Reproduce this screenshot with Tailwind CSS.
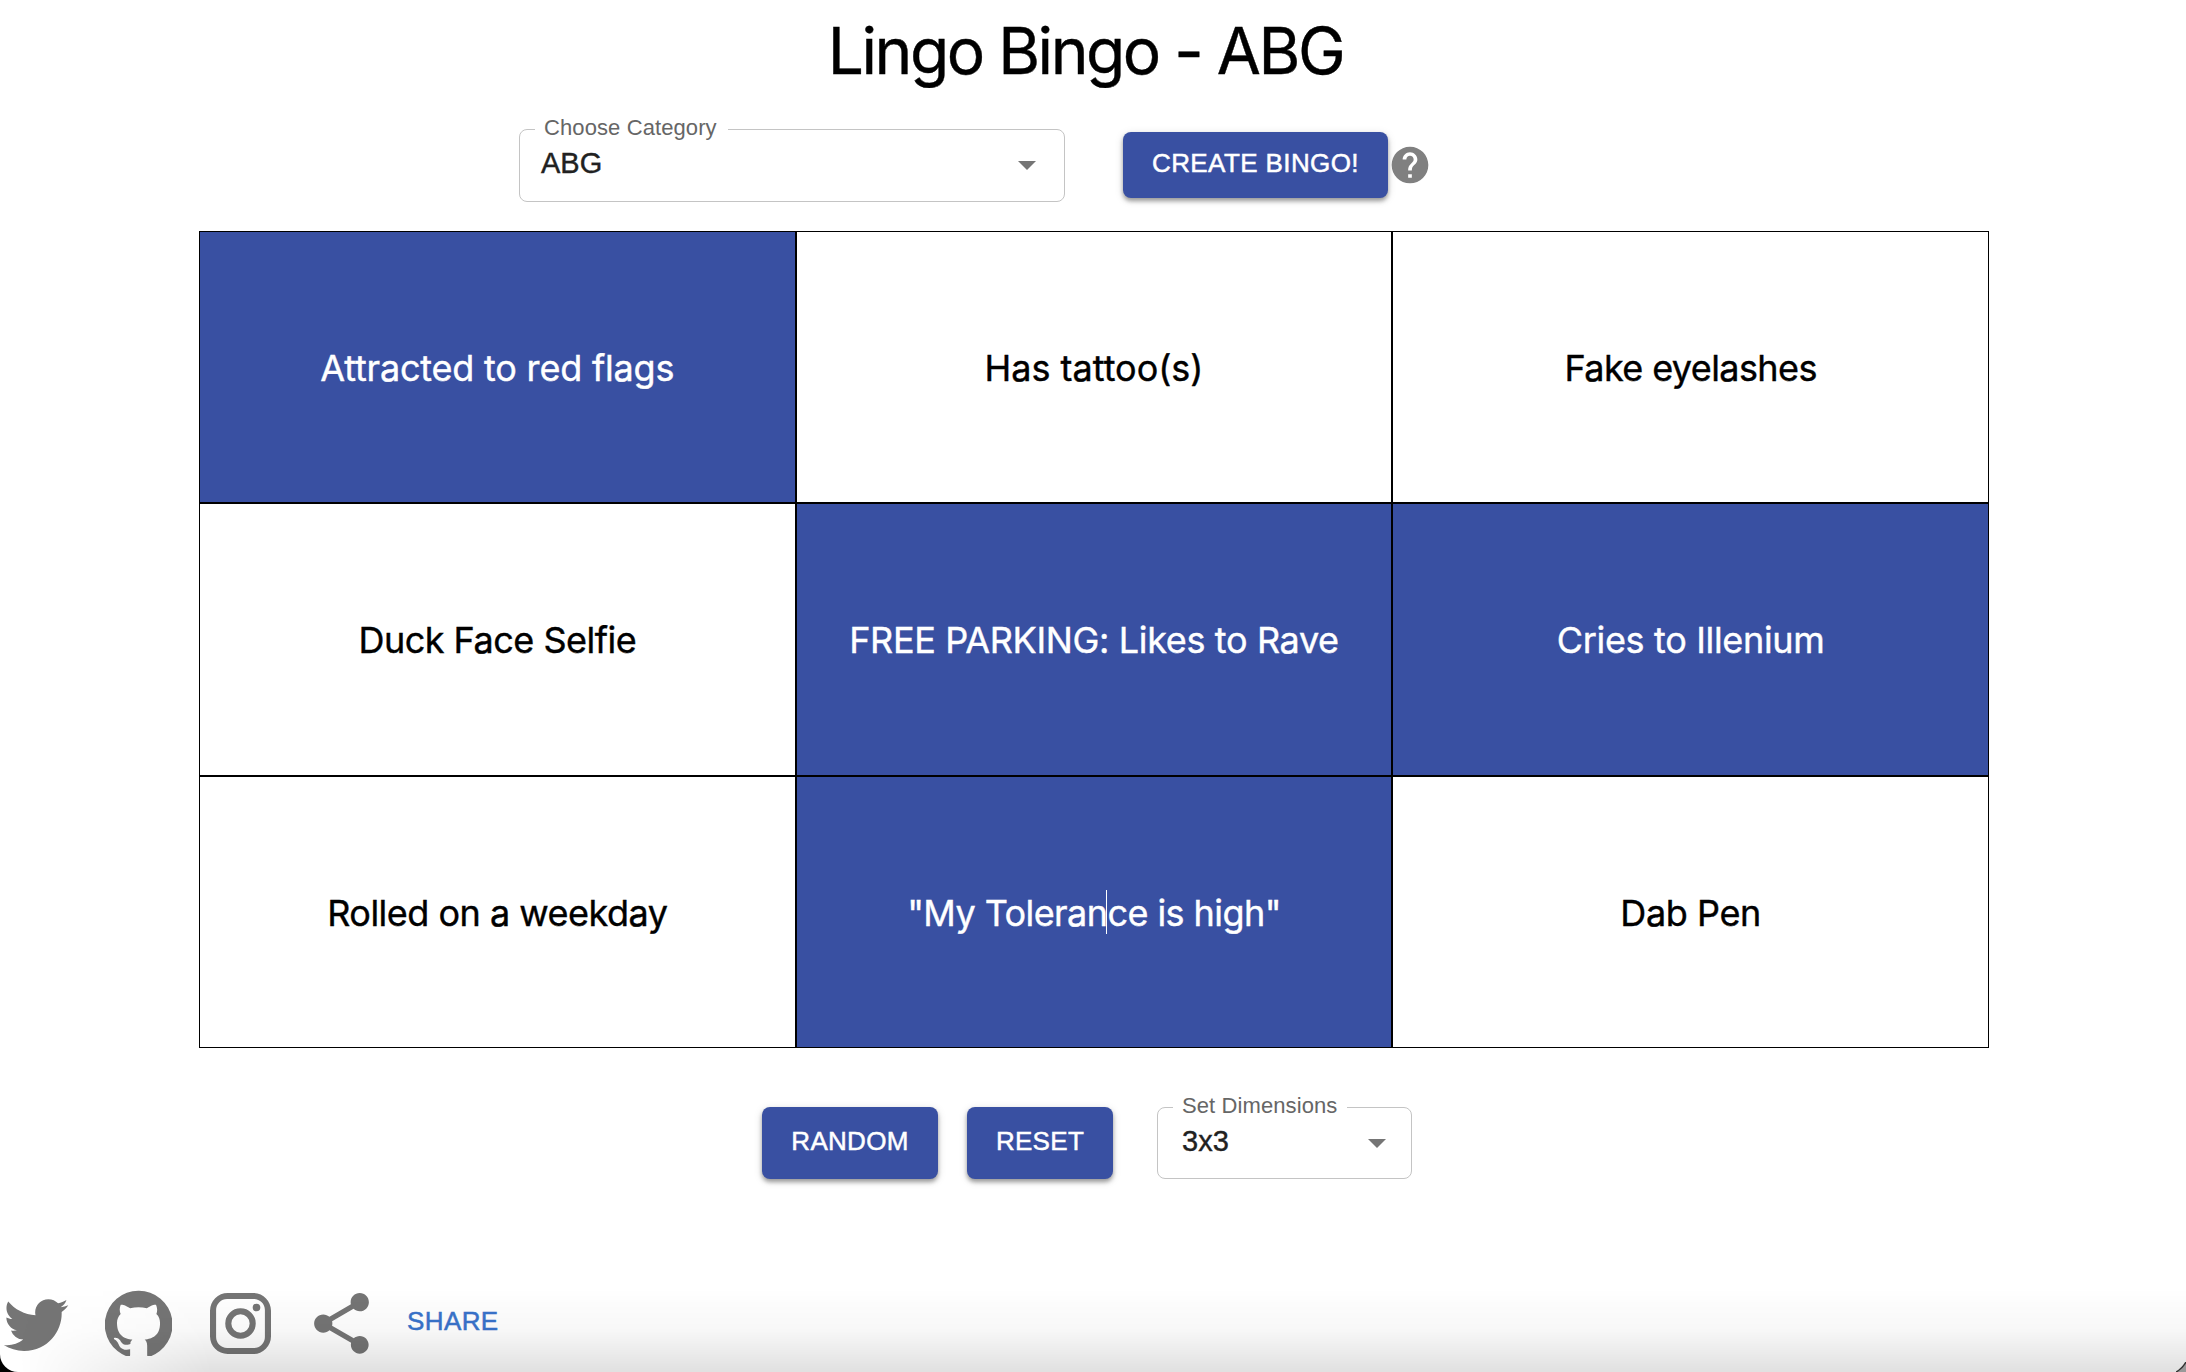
<!DOCTYPE html>
<html lang="en">

<head>
    <meta charset="UTF-8">
    <meta name="viewport" content="width=device-width, initial-scale=1.0">
    <title>Lingo Bingo</title>
    <script src="https://cdn.jsdelivr.net/npm/@tailwindcss/browser@4"></script>
</head>

<body class="bg-black">
    <div id="app" class="relative flex flex-col w-full h-[1372px] overflow-hidden bg-white rounded-bl-[18px] font-['Liberation_Sans',sans-serif]">
        <h1 class="h-[129px] pt-[12px] pr-[15px] text-center text-[64px] leading-[78px] tracking-[-2.45px] text-black font-['Inter',sans-serif] [-webkit-text-stroke:0.4px]">Lingo Bingo - ABG</h1>

        <!-- category picker -->
        <div class="flex h-[102px] pl-[519px]">
            <fieldset class="w-[546px] h-[73px] border border-[#c4c4c4] rounded-lg flex items-start relative">
                <span class="absolute left-[15px] top-[-15px] pl-[9px] pr-[11px] bg-white text-[22px] leading-[26px] tracking-[0.1px] text-[#666]">Choose Category</span>
                <span class="pl-[21px] pt-[15px] text-[29px] leading-[36px] text-[#212121] [-webkit-text-stroke:0.4px]">ABG</span>
                <svg class="absolute left-[498px] top-[31px] w-[18px] h-[9px]" viewBox="0 0 18 9" fill="#757575"><path d="M0 0h18L9 9z" /></svg>
            </fieldset>
            <button class="ml-[58px] mt-[3px] w-[265px] h-[66px] pb-[3px] rounded-lg bg-[#3950a2] text-white text-[26px] tracking-[0.4px] [-webkit-text-stroke:0.5px] shadow-[0_3px_4px_rgba(0,0,0,0.35),0_2px_10px_rgba(0,0,0,0.12)]">CREATE BINGO!</button>
            <svg class="mt-[14px] w-[44px] h-[44px]" viewBox="0 0 24 24" fill="#808080"><path d="M12 2C6.48 2 2 6.48 2 12s4.48 10 10 10 10-4.48 10-10S17.52 2 12 2zm1 17h-2v-2h2v2zm2.07-7.75l-.9.92C13.45 12.9 13 13.5 13 15h-2v-.5c0-1.1.45-2.1 1.17-2.83l1.24-1.26c.37-.36.59-.86.59-1.41 0-1.1-.9-2-2-2s-2 .9-2 2H8c0-2.21 1.79-4 4-4s4 1.79 4 4c0 .88-.36 1.68-.93 2.25z" /></svg>
        </div>

        <!-- board -->
        <div class="ml-[199px] w-[1790px] h-[817px] grid grid-cols-3 grid-rows-3 text-[36px] text-black font-['Inter',sans-serif] [-webkit-text-stroke:0.4px] [&>div]:flex [&>div]:items-center [&>div]:justify-center [&>div]:pt-[2px] [&>div]:border [&>div]:border-black">
            <div class="bg-[#3950a2] text-white tracking-[-0.2px]"><span>Attracted to red flags</span></div>
            <div><span>Has tattoo(s)</span></div>
            <div class="tracking-[-0.6px]"><span>Fake eyelashes</span></div>
            <div class="tracking-[-0.5px]"><span>Duck Face Selfie</span></div>
            <div class="bg-[#3950a2] text-white tracking-[-0.35px]"><span>FREE PARKING: Likes to Rave</span></div>
            <div class="bg-[#3950a2] text-white tracking-[-0.33px]"><span>Cries to Illenium</span></div>
            <div class="tracking-[-0.5px]"><span>Rolled on a weekday</span></div>
            <div class="bg-[#3950a2] text-white tracking-[-0.57px] relative"><span>"My Tolerance is high"</span><i class="absolute left-[309px] top-[113px] w-px h-[44px] bg-white"></i></div>
            <div class="tracking-[-0.4px]"><span>Dab Pen</span></div>
        </div>

        <!-- board controls -->
        <div class="flex mt-[59px] pl-[762px]">
            <button class="w-[176px] h-[72px] pb-[4px] rounded-lg bg-[#3950a2] text-white text-[26px] tracking-[0.3px] [-webkit-text-stroke:0.5px] shadow-[0_3px_4px_rgba(0,0,0,0.35),0_2px_10px_rgba(0,0,0,0.12)]">RANDOM</button>
            <button class="ml-[29px] w-[146px] h-[72px] pb-[4px] rounded-lg bg-[#3950a2] text-white text-[26px] tracking-[0.3px] [-webkit-text-stroke:0.5px] shadow-[0_3px_4px_rgba(0,0,0,0.35),0_2px_10px_rgba(0,0,0,0.12)]">RESET</button>
            <fieldset class="ml-[44px] w-[255px] h-[72px] border border-[#c4c4c4] rounded-lg flex items-start relative">
                <span class="absolute left-[15px] top-[-15px] pl-[9px] pr-[10px] bg-white text-[22px] leading-[26px] tracking-[0.1px] text-[#666]">Set Dimensions</span>
                <span class="pl-[24px] pt-[15px] text-[29px] leading-[36px] text-[#212121] [-webkit-text-stroke:0.4px]">3x3</span>
                <svg class="absolute left-[210px] top-[31px] w-[18px] h-[9px]" viewBox="0 0 18 9" fill="#757575"><path d="M0 0h18L9 9z" /></svg>
            </fieldset>
        </div>

        <!-- footer links -->
        <div class="flex items-center mt-[108px] h-[72px] text-[#757575]">
            <svg class="-ml-[1px] w-[74px] h-[73px]" viewBox="0 0 24 24" preserveAspectRatio="none" fill="currentColor"><path d="M22.46 6c-.77.35-1.6.58-2.46.69.88-.53 1.56-1.37 1.88-2.38-.83.5-1.75.85-2.72 1.05C18.37 4.5 17.26 4 16 4c-2.35 0-4.27 1.92-4.27 4.29 0 .34.04.67.11.98C8.28 9.09 5.11 7.38 3 4.79c-.37.63-.58 1.37-.58 2.15 0 1.49.75 2.81 1.91 3.56-.71 0-1.37-.2-1.95-.5v.03c0 2.08 1.48 3.82 3.44 4.21a4.22 4.22 0 0 1-1.93.07 4.28 4.28 0 0 0 4 2.98 8.521 8.521 0 0 1-5.33 1.84c-.34 0-.68-.02-1.02-.06C3.44 20.29 5.7 21 8.12 21 16 21 20.33 14.46 20.33 8.79c0-.19 0-.37-.01-.56.84-.6 1.56-1.36 2.14-2.23z" /></svg>
            <svg class="ml-[32px] w-[67px] h-[66px]" viewBox="1 1 22 21.5" preserveAspectRatio="none" fill="currentColor"><path d="M12 1.27a11 11 0 00-3.48 21.46c.55.09.73-.28.73-.55v-1.84c-3.03.64-3.67-1.46-3.67-1.46-.55-1.29-1.28-1.65-1.28-1.65-.92-.65.1-.65.1-.65 1.1 0 1.73 1.1 1.73 1.1.92 1.65 2.57 1.2 3.21.92a2 2 0 01.64-1.47c-2.47-.27-5.04-1.19-5.04-5.5 0-1.1.46-2.1 1.2-2.84a3.76 3.76 0 010-2.93s.91-.28 3.11 1.1c1.8-.49 3.7-.49 5.5 0 2.1-1.38 3.02-1.1 3.02-1.1a3.76 3.76 0 01.1 2.93c.83.74 1.2 1.74 1.2 2.94 0 4.21-2.57 5.13-5.04 5.4.45.37.82.92.82 2.02v3.03c0 .27.1.64.73.55A11 11 0 0012 1.27" /></svg>
            <svg class="ml-[38px] w-[61px] h-[61px]" viewBox="2 2 20 20" fill="currentColor"><path d="M7.8 2h8.4C19.4 2 22 4.6 22 7.8v8.4a5.8 5.8 0 0 1-5.8 5.8H7.8C4.6 22 2 19.4 2 16.2V7.8A5.8 5.8 0 0 1 7.8 2m-.2 2A3.6 3.6 0 0 0 4 7.6v8.8C4 18.39 5.61 20 7.6 20h8.8a3.6 3.6 0 0 0 3.6-3.6V7.6C20 5.61 18.39 4 16.4 4H7.6m9.65 1.5a1.25 1.25 0 0 1 1.25 1.25A1.25 1.25 0 0 1 17.25 8 1.25 1.25 0 0 1 16 6.75a1.25 1.25 0 0 1 1.25-1.25M12 7a5 5 0 0 1 5 5 5 5 0 0 1-5 5 5 5 0 0 1-5-5 5 5 0 0 1 5-5m0 2a3 3 0 0 0-3 3 3 3 0 0 0 3 3 3 3 0 0 0 3-3 3 3 0 0 0-3-3z" /></svg>
            <svg class="ml-[34px] w-[73px] h-[73px]" viewBox="0 0 24 24" fill="currentColor"><path d="M18 16.08c-.76 0-1.44.3-1.96.77L8.91 12.7c.05-.23.09-.46.09-.7s-.04-.47-.09-.7l7.05-4.11c.54.5 1.25.81 2.04.81 1.66 0 3-1.34 3-3s-1.34-3-3-3-3 1.34-3 3c0 .24.04.47.09.7L8.04 9.81C7.5 9.31 6.79 9 6 9c-1.66 0-3 1.34-3 3s1.34 3 3 3c.79 0 1.5-.31 2.04-.81l7.12 4.16c-.05.21-.08.43-.08.65 0 1.61 1.31 2.92 2.92 2.92 1.61 0 2.92-1.31 2.92-2.92s-1.31-2.92-2.92-2.92z" /></svg>
            <button class="ml-[29px] pb-[3px] text-[26px] tracking-[0.4px] text-[#3973cb] [-webkit-text-stroke:0.5px]">SHARE</button>
        </div>

        <!-- shade along the bottom edge -->
        <div class="absolute inset-x-0 bottom-0 h-[84px] bg-linear-to-b from-black/0 via-black/3 to-black/12 [mask-image:linear-gradient(80deg,transparent_20px,black_210px)]"></div>

        <!-- window corner -->
        <svg class="absolute right-0 bottom-0 w-[10px] h-[10px]" viewBox="0 0 10 10"><path d="M0 10Q6 7 10 0V10z" fill="#999" /><path d="M0 10Q6 7 10 0" fill="none" stroke="#333" stroke-width="1.5" /></svg>
    </div>
</body>

</html>
